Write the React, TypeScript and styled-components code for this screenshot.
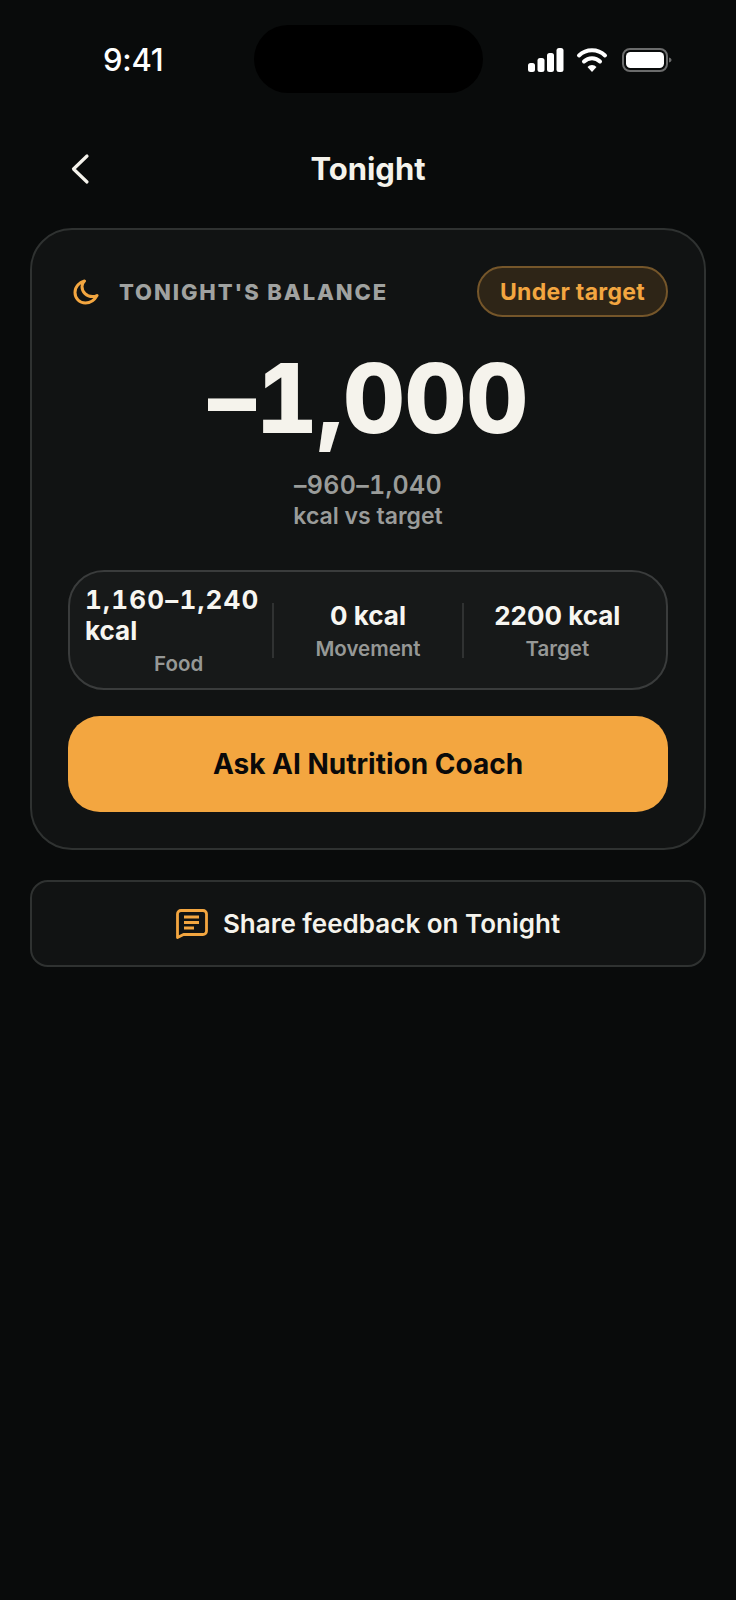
import React from "react";
import styled, { createGlobalStyle } from "styled-components";

const GlobalStyle = createGlobalStyle`
  * {
    box-sizing: border-box;
  }

  html,
  body {
    margin: 0;
    background: #090b0b;
  }

  body {
    font-family: Inter, "Noto Sans", sans-serif;
    color: #f5f3ec;
  }
`;

const ACCENT = "#f3a640";

const Page = styled.div`
  width: 736px;
  height: 1600px;
  padding: 25px 30px 0;
  background: #090b0b;
  overflow: hidden;
`;

const StatusBar = styled.div`
  display: grid;
  grid-template-columns: 1fr 229px 1fr;
  height: 68px;
  margin: 0 -30px;
`;

const Time = styled.div`
  padding: 18px 0 0 103px;
  font-size: 31px;
  line-height: 34px;
  font-weight: 500;
  letter-spacing: -0.2px;
  color: #ffffff;
`;

const Island = styled.div`
  background: #000000;
  border-radius: 34px;
`;

const StatusIcons = styled.div`
  display: flex;
  align-items: flex-start;
  padding: 23px 0 0 45px;
`;

const Nav = styled.div`
  display: grid;
  grid-template-columns: 1fr auto 1fr;
  align-items: center;
  height: 60px;
  margin-top: 46px;
  padding: 0 40px;
`;

const NavTitle = styled.div`
  font-size: 31px;
  font-weight: 700;
  line-height: 36px;
`;

const Card = styled.section`
  margin-top: 29px;
  padding: 36px 36px 36px;
  height: 622px;
  background: #111313;
  border: 2px solid #2f3231;
  border-radius: 42px;
`;

const CardHead = styled.div`
  display: flex;
  align-items: center;
  justify-content: space-between;
`;

const HeadLabel = styled.div`
  display: flex;
  align-items: center;
  gap: 20px;
  padding-left: 5px;
  font-size: 22px;
  font-weight: 800;
  letter-spacing: 1.9px;
  color: #a0a2a0;
`;

const Badge = styled.div`
  height: 51px;
  padding: 0 21px;
  display: flex;
  align-items: center;
  font-size: 23px;
  font-weight: 700;
  letter-spacing: 0.3px;
  color: ${ACCENT};
  background: #2e2517;
  border: 2px solid #75562a;
  border-radius: 26px;
`;

const BigNumber = styled.div`
  margin-top: 22px;
  text-align: center;
  font-size: 96px;
  line-height: 118px;
  font-weight: 800;
  letter-spacing: -0.3px;
  font-feature-settings: "tnum" 1;
`;

const SubValue = styled.div`
  margin-top: 12px;
  text-align: center;
  font-size: 25px;
  line-height: 32px;
  font-weight: 600;
  letter-spacing: 0.3px;
  font-feature-settings: "tnum" 1;
  color: #9a9c9a;
`;

const SubLabel = styled.div`
  margin-top: -1px;
  text-align: center;
  font-size: 23px;
  line-height: 32px;
  font-weight: 600;
  color: #9a9c9a;
`;

const Stats = styled.div`
  display: grid;
  grid-template-columns: 1fr 2px 1fr 2px 1fr;
  align-items: center;
  margin-top: 38px;
  padding: 12px 15px;
  height: 120px;
  background: #171919;
  border: 2px solid #3a3c3c;
  border-radius: 36px;
`;

const Stat = styled.div`
  display: flex;
  flex-direction: column;
  align-items: center;
  min-width: 0;
`;

const StatValue = styled.div`
  font-size: 26px;
  line-height: 31px;
  font-weight: 700;
  color: #f7f6f1;
`;

const StatRange = styled.span`
  letter-spacing: 1.2px;
  font-feature-settings: "tnum" 1;
`;

const StatLabel = styled.div`
  margin-top: 4px;
  font-size: 20.5px;
  line-height: 28px;
  font-weight: 600;
  color: #969896;
`;

const Divider = styled.div`
  height: 55px;
  margin-bottom: 2px;
  background: #303232;
`;

const CoachButton = styled.button`
  display: block;
  width: 100%;
  height: 96px;
  margin-top: 26px;
  border: none;
  border-radius: 32px;
  background: ${ACCENT};
  color: #0a0a0a;
  font-family: inherit;
  font-size: 28px;
  font-weight: 700;
`;

const FeedbackButton = styled.button`
  display: flex;
  align-items: center;
  justify-content: center;
  gap: 15px;
  width: 100%;
  height: 87px;
  margin-top: 30px;
  background: #111313;
  border: 2px solid #2f3231;
  border-radius: 18px;
  color: #f5f3ec;
  font-family: inherit;
  font-size: 26px;
  font-weight: 600;
`;

const App: React.FC = () => {
  return (
    <Page>
      <GlobalStyle />
      <StatusBar>
        <Time>9:41</Time>
        <Island />
        <StatusIcons>
          <svg width="146" height="26" viewBox="0 0 146 26" fill="none">
            <rect x="0" y="15" width="7" height="9" rx="2.5" fill="#fff" />
            <rect x="9.5" y="10" width="7" height="14" rx="2.5" fill="#fff" />
            <rect x="19" y="5" width="7" height="19" rx="2.5" fill="#fff" />
            <rect x="28.5" y="0" width="7" height="24" rx="2.5" fill="#fff" />
            <path d="M51 7.5a19 19 0 0 1 26 0" stroke="#fff" strokeWidth="4" strokeLinecap="round" />
            <path d="M56 13.5a11.5 11.5 0 0 1 16 0" stroke="#fff" strokeWidth="4" strokeLinecap="round" />
            <path d="M59.5 19a6 6 0 0 1 9 0L64 24z" fill="#fff" />
            <rect x="95" y="1" width="44" height="22" rx="7" stroke="#6b6c6c" strokeWidth="2" />
            <rect x="98" y="4" width="38" height="16" rx="4.5" fill="#fff" />
            <path d="M141 9.5c1.8.6 2.5 1.4 2.5 2.5s-.7 1.9-2.5 2.5z" fill="#6b6c6c" />
          </svg>
        </StatusIcons>
      </StatusBar>

      <Nav>
        <svg width="20" height="32" viewBox="0 0 20 32" fill="none">
          <path d="M17 3 3.5 16 17 29" stroke="#f5f3ec" strokeWidth="3.2" strokeLinecap="round" strokeLinejoin="round" />
        </svg>
        <NavTitle>Tonight</NavTitle>
        <span />
      </Nav>

      <Card>
        <CardHead>
          <HeadLabel>
            <svg width="26" height="26" viewBox="0 0 26 26" fill="none">
              <path
                d="M11.5 2C6.5 3.5 2 7.5 2 13.5 2 19.5 6.5 24 12.5 24c5 0 9-3 11.5-7.5-1.5.7-3 1-4.5 1C13.5 17.5 9 13 9 7.5 9 5.5 10 3.5 11.5 2Z"
                stroke={ACCENT}
                strokeWidth="3"
                strokeLinejoin="round"
              />
            </svg>
            TONIGHT'S BALANCE
          </HeadLabel>
          <Badge>Under target</Badge>
        </CardHead>

        <BigNumber>–1,000</BigNumber>
        <SubValue>–960–1,040</SubValue>
        <SubLabel>kcal vs target</SubLabel>

        <Stats>
          <Stat>
            <StatValue>
              <StatRange>1,160–1,240</StatRange> kcal
            </StatValue>
            <StatLabel>Food</StatLabel>
          </Stat>
          <Divider />
          <Stat>
            <StatValue>0 kcal</StatValue>
            <StatLabel>Movement</StatLabel>
          </Stat>
          <Divider />
          <Stat>
            <StatValue>2200 kcal</StatValue>
            <StatLabel>Target</StatLabel>
          </Stat>
        </Stats>

        <CoachButton type="button">Ask AI Nutrition Coach</CoachButton>
      </Card>

      <FeedbackButton type="button">
        <svg width="32" height="30" viewBox="0 0 32 30" fill="none">
          <path
            d="M5 1.5h22a3.5 3.5 0 0 1 3.5 3.5v17a3.5 3.5 0 0 1-3.5 3.5H7.5L1.5 28.5V5A3.5 3.5 0 0 1 5 1.5Z"
            stroke={ACCENT}
            strokeWidth="2.8"
            strokeLinejoin="round"
          />
          <path d="M8 8h15M8 13.5h15M8 19h10" stroke={ACCENT} strokeWidth="2.8" strokeLinecap="butt" />
        </svg>
        Share feedback on Tonight
      </FeedbackButton>
    </Page>
  );
};

export default App;
